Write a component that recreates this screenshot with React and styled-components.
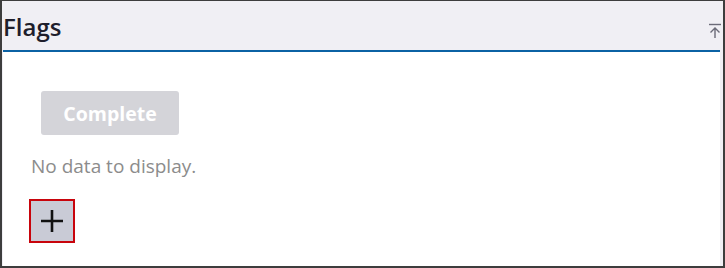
import React from 'react'
import styled, { createGlobalStyle } from 'styled-components'

const Global = createGlobalStyle`
  html, body {
    margin: 0;
    padding: 0;
    background: #ffffff;
  }
  body {
    font-family: "Open Sans", "Liberation Sans", sans-serif;
  }
`

function App() {
  return (
    <>
      <Global />
      <Frame>
        <Header>
          <Title>Flags</Title>
          <CollapseBtn aria-label="Collapse">
            <svg width="14" height="16" viewBox="0 0 14 16" fill="none">
              <path d="M1 1.5h12" stroke="#6b6b78" strokeWidth="1.4" />
              <path d="M7 15V5M2.5 9.5 7 5l4.5 4.5" stroke="#6b6b78" strokeWidth="1.4" />
            </svg>
          </CollapseBtn>
        </Header>
        <Body>
          <CompleteButton disabled>Complete</CompleteButton>
          <Empty>No data to display.</Empty>
          <AddButton aria-label="Add">
            <svg width="24" height="24" viewBox="0 0 24 24">
              <path d="M12 1v22M1 12h22" stroke="#111" strokeWidth="2.6" />
            </svg>
          </AddButton>
        </Body>
      </Frame>
    </>
  )
}

const Frame = styled.div`
  box-sizing: border-box;
  width: 725px;
  height: 268px;
  border: 2px solid #3d3d3d;
  border-top-width: 1px;
  background: #f0eff4;
  padding: 0 3px 0 1px;
  display: flex;
  flex-direction: column;
`

const Header = styled.div`
  height: 49px;
  border-bottom: 2px solid #0b62a4;
  display: flex;
  align-items: flex-end;
  justify-content: space-between;
`

const Title = styled.h2`
  margin: 0 0 7px 0;
  font-size: 24px;
  font-weight: 600;
  color: #1e1e2c;
  line-height: 32px;
`

const CollapseBtn = styled.button`
  border: none;
  background: none;
  padding: 0;
  margin: 0 -2px 11px 0;
  display: flex;
  cursor: pointer;
`

const Body = styled.div`
  flex: 1;
  background: #ffffff;
  display: flex;
  flex-direction: column;
  align-items: flex-start;
  padding: 39px 0 0 26px;
`

const CompleteButton = styled.button`
  width: 138px;
  height: 44px;
  margin-left: 12px;
  border: none;
  border-radius: 3px;
  background: #d4d4d9;
  color: #ffffff;
  font-family: "Open Sans", "Liberation Sans", sans-serif;
  font-size: 19.5px;
  font-weight: 700;
`

const Empty = styled.p`
  margin: 18px 0 0 2px;
  font-size: 19px;
  color: #8c8c8c;
  line-height: 26px;
`

const AddButton = styled.button`
  box-sizing: border-box;
  width: 46px;
  height: 44px;
  margin-top: 20px;
  border: 2px solid #c8040c;
  background: #c9cbd6;
  display: flex;
  align-items: center;
  justify-content: center;
  padding: 0;
  cursor: pointer;
`

export default App
